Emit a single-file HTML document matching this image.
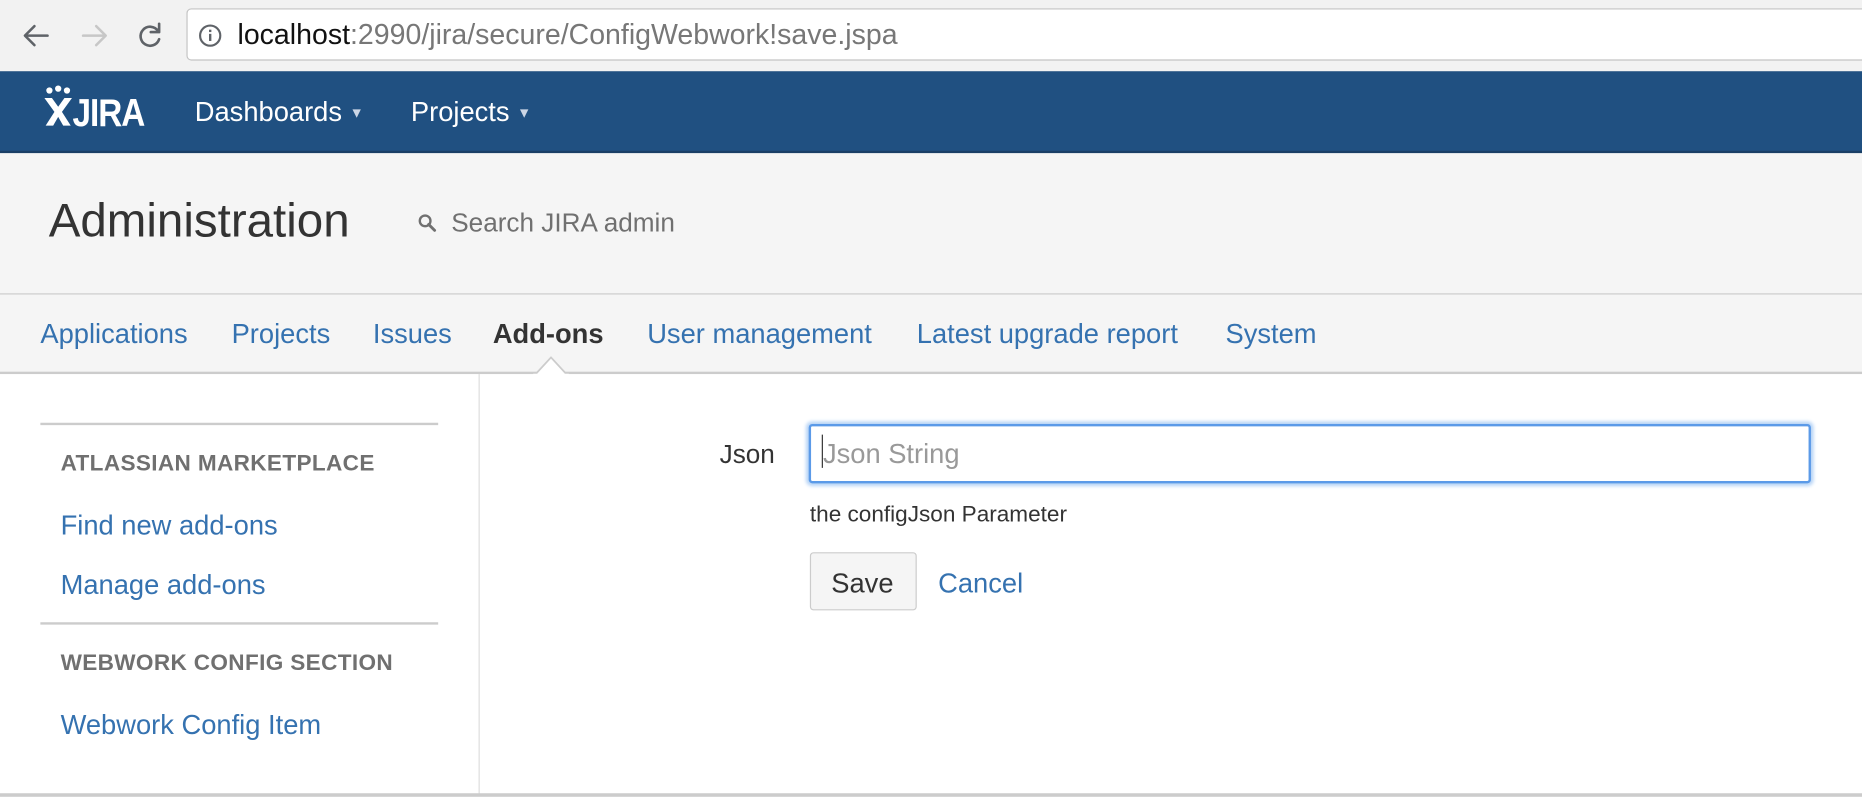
<!DOCTYPE html>
<html><head><meta charset="utf-8"><style>
html,body{margin:0;padding:0;width:1862px;height:796px;overflow:hidden;background:#fff;font-family:"Liberation Sans",Arial,sans-serif}
#w{position:absolute;left:0;top:0;width:1568px;height:671px;transform:scale(1.1875);transform-origin:0 0}
.a{position:absolute;white-space:nowrap}
.blue{color:#3572b0}
.t{font-size:23px}
</style></head><body><div id="w">
<div class="a" style="left:0;top:0;width:1568px;height:60px;background:#f2f2f2;border-bottom:1px solid #d0d0d0"></div>
<svg class="a" style="left:16px;top:17px" width="130" height="26" viewBox="0 0 130 26">
<g fill="none" stroke-width="2.2" stroke-linecap="round" stroke-linejoin="round">
<path d="M24 13H6M13 5L5 13l8 8" stroke="#5f6368"/>
<path d="M54 13h18M65 5l8 8-8 8" stroke="#c7c7c7"/>
<path d="M117 9a8 8 0 1 0 1 7" stroke="#5f6368"/>
<path d="M118 3v7h-7" stroke="#5f6368"/>
</g></svg>
<div class="a" style="left:157px;top:7px;width:1420px;height:42px;background:#fff;border:1px solid #c4c4c4;border-radius:4px"></div>
<svg class="a" style="left:167px;top:20px" width="20" height="20" viewBox="0 0 20 20"><circle cx="10" cy="10" r="8.5" fill="none" stroke="#5f6368" stroke-width="1.8"/><rect x="9" y="8.5" width="2" height="6" fill="#5f6368"/><rect x="9" y="5" width="2" height="2" fill="#5f6368"/></svg>
<div class="a" style="left:200px;top:16px;font-size:24px;color:#111">localhost<span style="color:#777">:2990/jira/secure/ConfigWebwork!save.jspa</span></div>

<div class="a" style="left:0;top:60px;width:1568px;height:67px;background:#205081;border-bottom:2px solid #1a3f66"></div>
<svg class="a" style="left:36px;top:72px" width="26" height="38" viewBox="0 0 24 36"><g fill="#fff"><circle cx="5" cy="4" r="2.5"/><circle cx="12" cy="2.5" r="2.5"/><circle cx="19" cy="4" r="2.5"/><path d="M1 10h6l5 7 5-7h6l-8 11 7 11h-6l-4-7-4 7H2l7-11z"/></g></svg>
<div class="a" style="left:61px;top:76px;font-size:33px;font-weight:bold;color:#fff;letter-spacing:-1px;transform:scaleX(.85);transform-origin:0 0">JIRA</div>
<div class="a" style="left:164px;top:81px;font-size:23px;color:#fff">Dashboards <span style="font-size:12px;color:#ccd6e6;vertical-align:3px">&#9660;</span></div>
<div class="a" style="left:346px;top:81px;font-size:23px;color:#fff">Projects <span style="font-size:12px;color:#ccd6e6;vertical-align:3px">&#9660;</span></div>

<div class="a" style="left:0;top:129px;width:1568px;height:185px;background:#f5f5f5"></div>
<div class="a" style="left:0;top:247px;width:1568px;height:1px;background:#ccc"></div>
<div class="a" style="left:41px;top:164px;font-size:40px;color:#333">Administration</div>
<svg class="a" style="left:351px;top:179px" width="18" height="18" viewBox="0 0 18 18"><circle cx="7" cy="7" r="4.5" fill="none" stroke="#707070" stroke-width="2"/><path d="M10 10l5 5" stroke="#707070" stroke-width="2.4" stroke-linecap="round"/></svg>
<div class="a" style="left:380px;top:175px;font-size:22px;color:#707070">Search JIRA admin</div>

<div class="a blue t" style="left:34px;top:268px">Applications</div>
<div class="a blue t" style="left:195px;top:268px">Projects</div>
<div class="a blue t" style="left:314px;top:268px">Issues</div>
<div class="a t" style="left:415px;top:268px;font-weight:bold;color:#333">Add-ons</div>
<div class="a blue t" style="left:545px;top:268px">User management</div>
<div class="a blue t" style="left:772px;top:268px">Latest upgrade report</div>
<div class="a blue t" style="left:1032px;top:268px">System</div>
<div class="a" style="left:0;top:313px;width:1568px;height:2px;background:#ccc"></div>
<svg class="a" style="left:449px;top:300px" width="30" height="16" viewBox="0 0 30 16"><path d="M0 14.5h2l12-12 1-1 1 1 12 12h2v2H0z" fill="#fff"/><path d="M0 14h3L15 1l12 13h3" fill="none" stroke="#ccc" stroke-width="1.5"/></svg>

<div class="a" style="left:403px;top:315px;width:1px;height:354px;background:#ddd"></div>
<div class="a" style="left:0;top:668px;width:1568px;height:3px;background:#ccc"></div>
<div class="a" style="left:34px;top:356px;width:335px;height:2px;background:#ccc"></div>
<div class="a" style="left:51px;top:380px;font-size:19px;letter-spacing:.3px;font-weight:bold;color:#707070">ATLASSIAN MARKETPLACE</div>
<div class="a blue t" style="left:51px;top:429px">Find new add-ons</div>
<div class="a blue t" style="left:51px;top:479px">Manage add-ons</div>
<div class="a" style="left:34px;top:524px;width:335px;height:2px;background:#ccc"></div>
<div class="a" style="left:51px;top:548px;font-size:19px;letter-spacing:.3px;font-weight:bold;color:#707070">WEBWORK CONFIG SECTION</div>
<div class="a blue t" style="left:51px;top:597px">Webwork Config Item</div>

<div class="a" style="left:606px;top:370px;font-size:22px;color:#333">Json</div>
<div class="a" style="left:681px;top:357px;width:840px;height:46px;border:2px solid #5b9ae8;border-radius:3px;box-shadow:0 0 3px 2px #b5d3f6;background:#fff"></div>
<div class="a" style="left:692px;top:366px;width:1px;height:28px;background:#333"></div>
<div class="a" style="left:693px;top:369px;font-size:23px;color:#999">Json String</div>
<div class="a" style="left:682px;top:423px;font-size:19px;color:#333">the configJson Parameter</div>
<div class="a" style="left:682px;top:465px;width:88px;height:47px;border:1px solid #ccc;border-radius:3px;background:#f5f5f5"></div>
<div class="a" style="left:700px;top:478px;font-size:23px;color:#333">Save</div>
<div class="a blue t" style="left:790px;top:478px">Cancel</div>
</div></body></html>
